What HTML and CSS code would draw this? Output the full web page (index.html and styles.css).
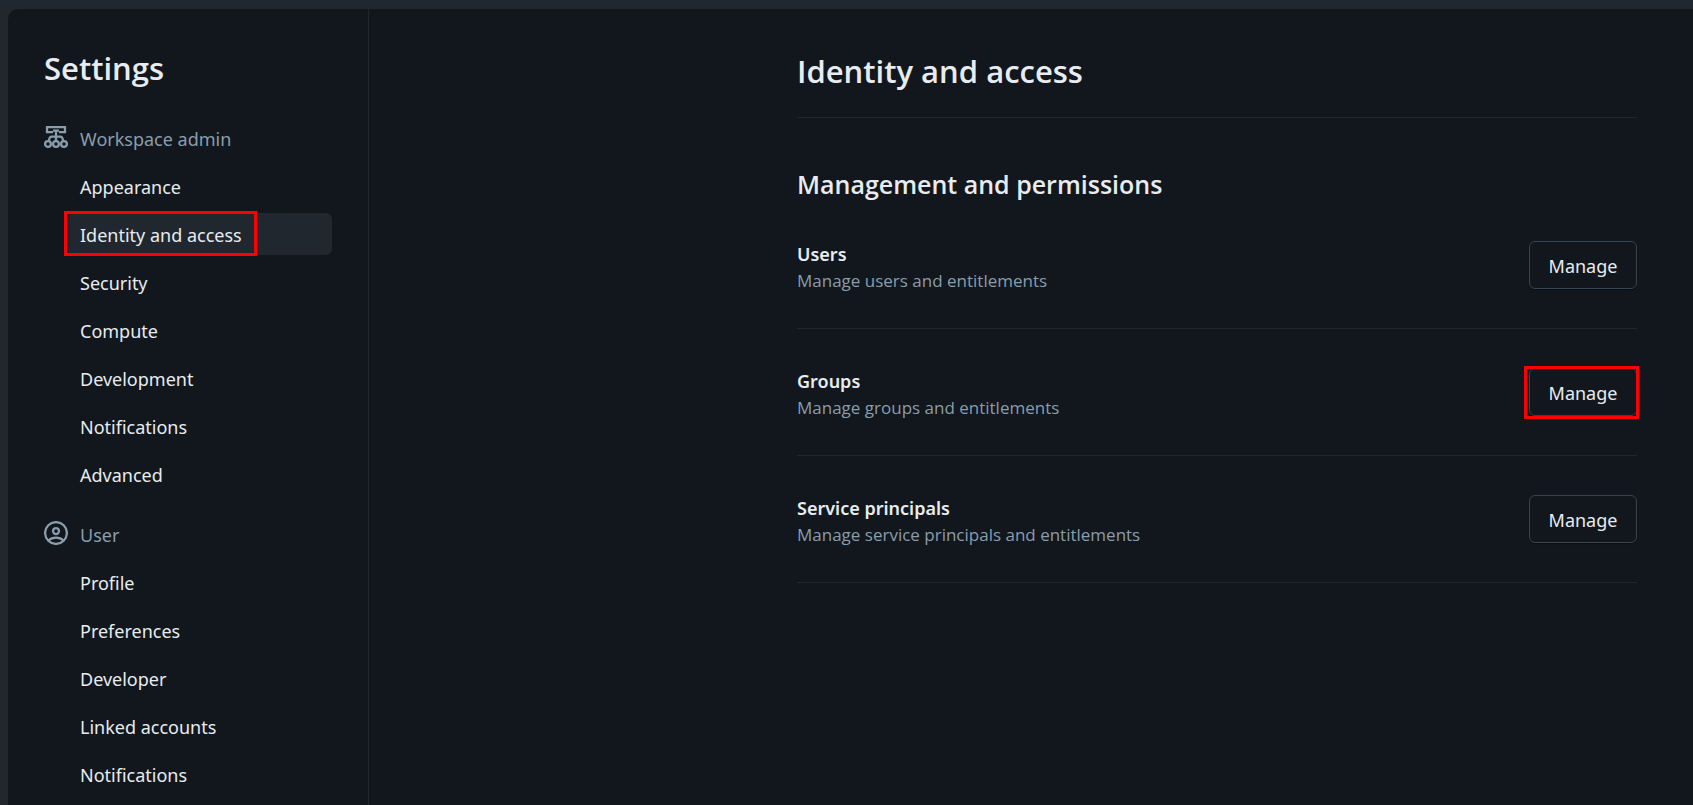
FILE: index.html
```
<!DOCTYPE html>
<html lang="en">
<head>
<meta charset="utf-8">
<title>Settings</title>
<meta name="viewport" content="width=device-width, initial-scale=1">
<link rel="stylesheet" href="styles.css">
</head>
<body>
<div class="shell">
  <nav class="sidebar" aria-label="Settings">
    <h1 class="sidebar-title">Settings</h1>
    <section class="group">
      <h2 class="group-title">
        <svg class="icon" viewBox="0 0 24 24" fill="none" stroke="currentColor" stroke-width="2.25" aria-hidden="true">
          <path d="M9 7H3V2h18v5H15M9 5.500h6M12 6v10M5 16c0-3 1-4.500 3-4.500h8c2 0 3 1.500 3 4.500"/>
          <circle cx="4" cy="19" r="2.900"/><circle cx="12" cy="19" r="2.900"/><circle cx="20" cy="19" r="2.900"/>
        </svg>
        Workspace admin
      </h2>
      <ul class="links">
        <li><a class="link" href="#appearance">Appearance</a></li>
        <li><a class="link active" href="#identity" aria-current="page"><span class="marked marked-link">Identity and access</span></a></li>
        <li><a class="link" href="#security">Security</a></li>
        <li><a class="link" href="#compute">Compute</a></li>
        <li><a class="link" href="#development">Development</a></li>
        <li><a class="link" href="#notifications">Notifications</a></li>
        <li><a class="link" href="#advanced">Advanced</a></li>
      </ul>
    </section>
    <section class="group">
      <h2 class="group-title">
        <svg class="icon" viewBox="0 0 24 24" fill="none" stroke="currentColor" stroke-width="2.25" aria-hidden="true">
          <circle cx="12" cy="12" r="10.900"/><circle cx="12" cy="10" r="3"/>
          <path d="M4.500 19.500c4-4 11-4 15 0"/>
        </svg>
        User
      </h2>
      <ul class="links">
        <li><a class="link" href="#profile">Profile</a></li>
        <li><a class="link" href="#preferences">Preferences</a></li>
        <li><a class="link" href="#developer">Developer</a></li>
        <li><a class="link" href="#linked">Linked accounts</a></li>
        <li><a class="link" href="#user-notifications">Notifications</a></li>
      </ul>
    </section>
  </nav>
  <main class="content">
    <div class="panel">
      <h1 class="page-title">Identity and access</h1>
      <h2 class="section-title">Management and permissions</h2>
      <div class="row">
        <div class="row-text"><h3 class="row-title" id="users">Users</h3><p class="row-desc">Manage users and entitlements</p></div>
        <button class="button" type="button" aria-describedby="users">Manage</button>
      </div>
      <div class="row">
        <div class="row-text"><h3 class="row-title" id="groups">Groups</h3><p class="row-desc">Manage groups and entitlements</p></div>
        <button class="button marked marked-button" type="button" aria-describedby="groups">Manage</button>
      </div>
      <div class="row">
        <div class="row-text"><h3 class="row-title" id="principals">Service principals</h3><p class="row-desc">Manage service principals and entitlements</p></div>
        <button class="button" type="button" aria-describedby="principals">Manage</button>
      </div>
    </div>
  </main>
</div>
</body>
</html>
```
FILE: styles.css
```
* {
  box-sizing: border-box;
}

body {
  margin: 0;
  height: 100vh;
  overflow: hidden;
  padding: 9px 0 0 8px;
  background: #20272e;
  color: #e8ecf0;
  font-family: "Noto Sans", "Open Sans", sans-serif;
  font-size: 18px;
  line-height: 24px;
}

h1, h2, h3, p, ul {
  margin: 0;
  padding: 0;
  font-weight: 600;
}

h1, h2, .row-desc {
  font-family: "Open Sans", "Noto Sans", sans-serif;
}

.shell {
  display: flex;
  height: 100%;
  background: #11171d;
  border-top-left-radius: 10px;
}

.sidebar {
  flex: 0 0 361px;
  padding: 35px 36px 0;
  border-right: 1px solid #20272e;
}

.sidebar-title,
.page-title {
  font-size: 31px;
  line-height: 48px;
}

.sidebar-title {
  margin-bottom: 25px;
}

.group {
  margin-bottom: 18px;
}

.group-title {
  display: flex;
  align-items: center;
  gap: 12px;
  height: 42px;
  margin-bottom: 6px;
  padding-top: 2px;
  color: #8a9dac;
  font-family: inherit;
  font-size: 18px;
  font-weight: 400;
}

.icon {
  width: 24px;
  height: 24px;
  margin-bottom: 4px;
}

.links {
  display: flex;
  flex-direction: column;
  gap: 6px;
  padding-left: 24px;
  list-style: none;
  font-weight: 400;
}

.link {
  display: flex;
  align-items: center;
  height: 42px;
  padding: 2px 12px 0;
  border-radius: 6px;
  color: inherit;
  text-decoration: none;
}

.active {
  background: #20272e;
}

.marked {
  position: relative;
}

.marked::after {
  content: "";
  position: absolute;
  border: 3px solid #fe0000;
}

.marked-link::after {
  inset: -12px -15px -9px -16px;
}

.marked-button::after {
  inset: -3px -3px -4px -6px;
}

.content {
  flex: 1;
  padding: 38px 56px 0;
}

.panel {
  max-width: 840px;
  margin-left: auto;
}

.page-title {
  padding-bottom: 22px;
  border-bottom: 1px solid #20272e;
}

.section-title {
  padding-top: 49px;
  font-size: 25px;
  line-height: 35px;
}

.row {
  display: flex;
  align-items: center;
  justify-content: space-between;
  padding: 39px 0;
  border-bottom: 1px solid #20272e;
}

.row-text {
  margin: -2px 0 -4px;
}

.row-title {
  font-size: 18px;
  line-height: 30px;
}

.row-desc {
  color: #8a9dac;
  font-size: 17px;
  font-weight: 400;
  line-height: 24px;
}

.button {
  min-width: 108px;
  height: 48px;
  padding: 2px 18px 0;
  border: 1px solid #37444f;
  border-radius: 6px;
  background: transparent;
  box-shadow: 0 1px 1px #0a0e12;
  color: inherit;
  font: inherit;
}
```
